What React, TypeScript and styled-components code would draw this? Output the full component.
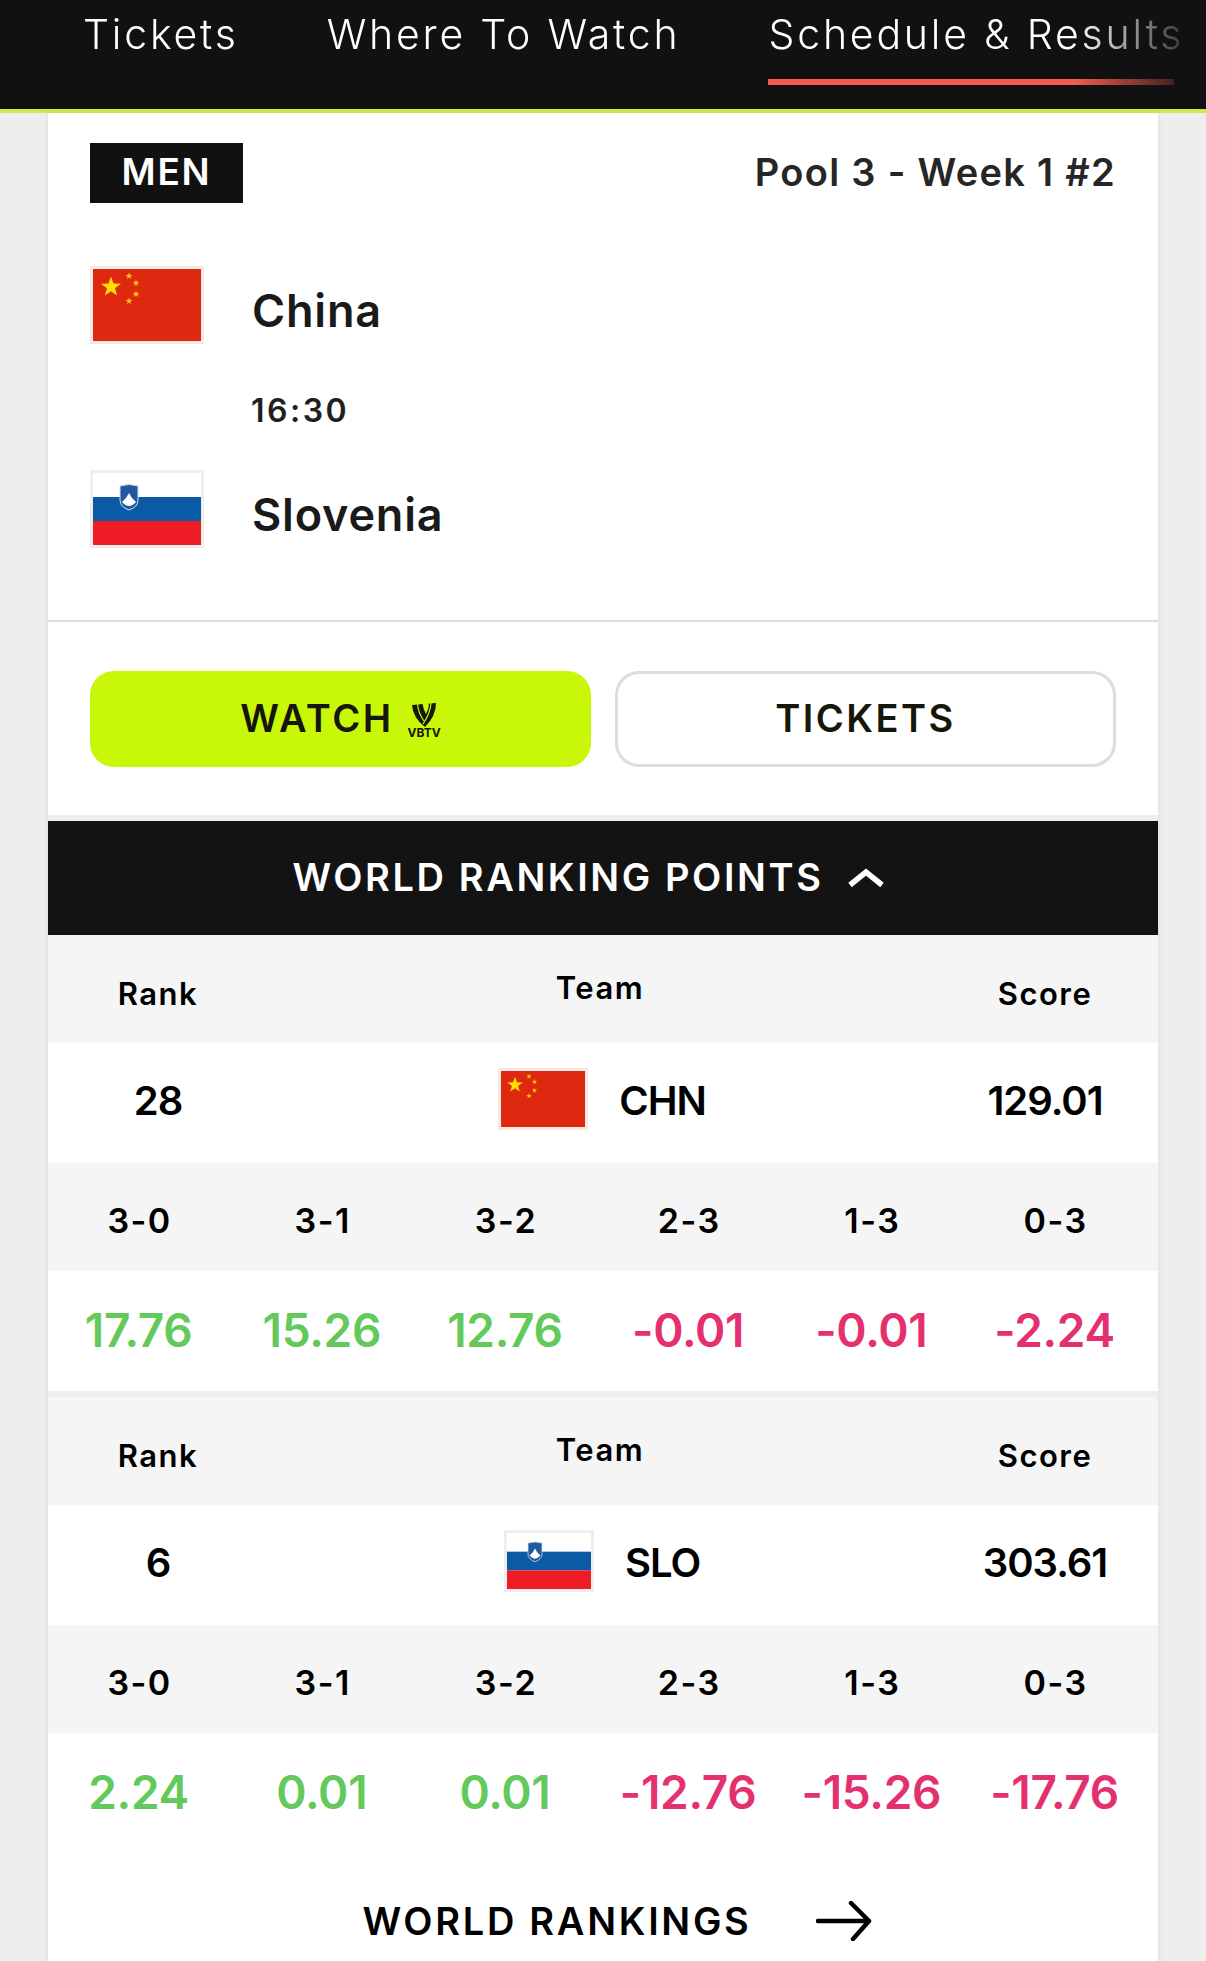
import * as React from 'react'
import styled, { createGlobalStyle } from 'styled-components'

const GlobalStyle = createGlobalStyle`
    html, body {
        margin: 0;
        padding: 0;
        background: #eeeeee;
    }
    body {
        font-family: Inter, "Liberation Sans", sans-serif;
        color: #171717;
    }
    * {
        box-sizing: border-box;
    }
`

const starPoints = (cx: number, cy: number, r: number) =>
    Array.from({ length: 10 }, (_, i) => {
        const radius = i % 2 === 0 ? r : r * 0.4
        const angle = (Math.PI / 5) * i - Math.PI / 2
        return `${cx + radius * Math.cos(angle)},${cy + radius * Math.sin(angle)}`
    }).join(' ')

const Flag = ({ code, width, height }: { code: 'chn' | 'slo'; width: number; height: number }) => (
    <FlagFrame $tint={code === 'chn' ? '#f5e9e6' : '#eeeeee'} style={{ width, height }}>
        {code === 'chn' ? (
            <svg viewBox="0 0 108 72" preserveAspectRatio="none" width="100%" height="100%">
                <rect width="108" height="72" fill="#de2910" />
                <polygon points={starPoints(18, 18, 10.5)} fill="#ffde00" />
                <polygon points={starPoints(36, 7, 3.6)} fill="#fbc613" />
                <polygon points={starPoints(43, 14, 3.6)} fill="#fbc613" />
                <polygon points={starPoints(43, 25, 3.6)} fill="#fbc613" />
                <polygon points={starPoints(36, 32, 3.6)} fill="#fbc613" />
            </svg>
        ) : (
            <svg viewBox="0 0 108 72" preserveAspectRatio="none" width="100%" height="100%">
                <rect width="108" height="24" fill="#ffffff" />
                <rect y="24" width="108" height="24" fill="#0b5aa6" />
                <rect y="48" width="108" height="24" fill="#ee1c25" />
                <path d="M27,13 Q36,10 45,13 L45,27 Q45,34 36,37 Q27,34 27,27 Z" fill="#1f5aa0" stroke="#cfdcec" strokeWidth="1" />
                <path d="M29,29 L33,25 L36,20 L39,25 L43,29 Q36,37 29,29 Z" fill="#ffffff" />
            </svg>
        )}
    </FlagFrame>
)

const VbtvMark = () => (
    <MarkWrap>
        <svg width="24" height="24" viewBox="0 0 24 24" fill="none">
            <path d="M0,2 L24,0 Q24,13 13,24 Q1,15 0,2 Z" fill="#14170a" />
            <path d="M5.500,0 Q6,10 12,18" stroke="#c8f708" strokeWidth="1.200" />
            <path d="M10.500,0 L17,0 Q17,6 14,11 Q11,6 10.500,0 Z" fill="#c8f708" />
            <path d="M19,0 Q18.500,10 11,21" stroke="#c8f708" strokeWidth="1.200" />
        </svg>
        <MarkLabel>VBTV</MarkLabel>
    </MarkWrap>
)

type Rates = { label: string; value: string }[]

const TeamRanking = ({
    rank,
    code,
    flag,
    score,
    rates,
}: {
    rank: string
    code: string
    flag: 'chn' | 'slo'
    score: string
    rates: Rates
}) => (
    <>
        <HeadRow>
            <HeadCell>Rank</HeadCell>
            <HeadCell $raised>Team</HeadCell>
            <HeadCell>Score</HeadCell>
        </HeadRow>
        <TeamRow>
            <TeamValue>{rank}</TeamValue>
            <TeamCell>
                <Flag code={flag} width={90} height={62} />
                <TeamValue>{code}</TeamValue>
            </TeamCell>
            <TeamValue>{score}</TeamValue>
        </TeamRow>
        <RatesHead>
            {rates.map((rate) => (
                <RateLabel key={rate.label}>{rate.label}</RateLabel>
            ))}
        </RatesHead>
        <RatesBody>
            {rates.map((rate) => (
                <RateValue key={rate.label} $negative={rate.value.startsWith('-')}>
                    {rate.value}
                </RateValue>
            ))}
        </RatesBody>
    </>
)

const labels = ['3-0', '3-1', '3-2', '2-3', '1-3', '0-3']
const toRates = (values: string[]): Rates => values.map((value, i) => ({ label: labels[i], value }))

export default function App() {
    return (
        <Page>
            <GlobalStyle />
            <Nav>
                <NavScroller>
                    <NavItem>Tickets</NavItem>
                    <NavItem>Where To Watch</NavItem>
                    <NavItem $active>Schedule &amp; Results</NavItem>
                </NavScroller>
            </Nav>
            <Card>
                <MatchInfo>
                    <MatchTop>
                        <GenderBadge>MEN</GenderBadge>
                        <PoolLabel>Pool 3 - Week 1 #2</PoolLabel>
                    </MatchTop>
                    <MatchTeam>
                        <Flag code="chn" width={114} height={78} />
                        <TeamName>China</TeamName>
                    </MatchTeam>
                    <MatchTime>16:30</MatchTime>
                    <MatchTeam>
                        <Flag code="slo" width={114} height={78} />
                        <TeamName>Slovenia</TeamName>
                    </MatchTeam>
                </MatchInfo>
                <Actions>
                    <ActionButton $primary>
                        WATCH
                        <VbtvMark />
                    </ActionButton>
                    <ActionButton>TICKETS</ActionButton>
                </Actions>
                <PointsBar>
                    WORLD RANKING POINTS
                    <ChevronIcon width="38" height="20" viewBox="0 0 38 20" fill="none">
                        <path d="M3,17 L19,4 L35,17" stroke="#ffffff" strokeWidth="5.500" />
                    </ChevronIcon>
                </PointsBar>
                <TeamRanking
                    rank="28"
                    code="CHN"
                    flag="chn"
                    score="129.01"
                    rates={toRates(['17.76', '15.26', '12.76', '-0.01', '-0.01', '-2.24'])}
                />
                <Separator />
                <TeamRanking
                    rank="6"
                    code="SLO"
                    flag="slo"
                    score="303.61"
                    rates={toRates(['2.24', '0.01', '0.01', '-12.76', '-15.26', '-17.76'])}
                />
                <RankingsLink>
                    WORLD RANKINGS
                    <svg width="56" height="40" viewBox="0 0 56 40" fill="none">
                        <path
                            d="M2,20 L53,20 M35,2 L53,20 L37,38"
                            stroke="#000000"
                            strokeWidth="4.500"
                            strokeLinecap="round"
                            strokeLinejoin="round"
                        />
                    </svg>
                </RankingsLink>
            </Card>
        </Page>
    )
}

const Page = styled.div`
    width: 1206px;
    height: 1961px;
    overflow: hidden;
    background: #eeeeee;
`

const Nav = styled.nav`
    height: 113px;
    background: #111111;
    border-bottom: 4px solid #cdea4a;
    overflow: hidden;
`

const NavScroller = styled.div`
    display: flex;
    gap: 88px;
    padding-left: 83px;
    height: 100%;
    white-space: nowrap;
    mask-image: linear-gradient(to right, #000 1075px, rgba(0, 0, 0, 0.15) 1185px);
`

const NavItem = styled.div<{ $active?: boolean }>`
    position: relative;
    height: 85px;
    padding-top: 9px;
    font-size: 41px;
    line-height: 50px;
    font-weight: 300;
    letter-spacing: 2.800px;
    color: #ffffff;

    &::after {
        content: '';
        display: ${({ $active }) => ($active ? 'block' : 'none')};
        position: absolute;
        left: 0;
        right: 10px;
        bottom: 0;
        height: 6px;
        background: #f25c50;
    }
`

const Card = styled.main`
    width: 1110px;
    margin: 0 auto 0 48px;
    background: #ffffff;
    box-shadow: 0 0 6px rgba(0, 0, 0, 0.08);
`

const MatchInfo = styled.section`
    padding: 30px 42px 0;
    height: 509px;
    border-bottom: 2px solid #dedede;
`

const MatchTop = styled.div`
    display: flex;
    justify-content: space-between;
    align-items: center;
    margin-bottom: 63px;
`

const GenderBadge = styled.div`
    width: 153px;
    height: 60px;
    display: flex;
    align-items: center;
    justify-content: center;
    padding-bottom: 3px;
    background: #111111;
    color: #ffffff;
    font-size: 37px;
    font-weight: 600;
    letter-spacing: 1.800px;
`

const PoolLabel = styled.div`
    font-size: 38px;
    font-weight: 600;
    letter-spacing: 1.300px;
    color: #262626;
    padding-bottom: 3px;
`

const MatchTeam = styled.div`
    display: flex;
    align-items: center;
    gap: 48px;
`

const FlagFrame = styled.div<{ $tint: string }>`
    flex: none;
    border: 3px solid ${({ $tint }) => $tint};
    line-height: 0;
`

const TeamName = styled.div`
    padding-top: 10px;
    font-size: 45px;
    font-weight: 600;
    letter-spacing: 0.800px;
    color: #1a1a1a;
`

const MatchTime = styled.div`
    margin: 52px 0 44px 161px;
    height: 30px;
    font-size: 32px;
    line-height: 30px;
    font-weight: 600;
    letter-spacing: 2.500px;
    color: #1f1f1f;
`

const Actions = styled.section`
    display: grid;
    grid-template-columns: 501px 501px;
    gap: 24px;
    padding: 49px 42px 48px;
`

const ActionButton = styled.div<{ $primary?: boolean }>`
    height: 96px;
    padding-bottom: 2px;
    display: flex;
    align-items: center;
    justify-content: center;
    gap: 14px;
    border-radius: 24px;
    font-size: 38px;
    font-weight: 600;
    letter-spacing: 2.500px;
    color: #14170a;
    background: ${({ $primary }) => ($primary ? '#c8f708' : '#ffffff')};
    border: ${({ $primary }) => ($primary ? 'none' : '3px solid #dddddd')};
`

const MarkWrap = styled.div`
    display: flex;
    flex-direction: column;
    align-items: center;
    margin-top: 5px;
    line-height: 0;
`

const MarkLabel = styled.span`
    font-size: 12px;
    line-height: 12px;
    font-weight: 700;
    letter-spacing: 0;
    color: #14170a;
`

const PointsBar = styled.section`
    height: 120px;
    border-top: 6px solid #eeeeee;
    display: flex;
    align-items: center;
    justify-content: center;
    gap: 24px;
    padding: 0 28px 2px 0;
    background: #131313;
    background-clip: padding-box;
    color: #ffffff;
    font-size: 38px;
    font-weight: 600;
    letter-spacing: 2.600px;
`

const ChevronIcon = styled.svg`
    margin-top: 2px;
`

const HeadRow = styled.div`
    height: 108px;
    display: grid;
    grid-template-columns: 220px 1fr 226px;
    align-items: center;
    background: #f5f5f5;
`

const HeadCell = styled.div<{ $raised?: boolean }>`
    text-align: center;
    font-size: 31px;
    font-weight: 600;
    letter-spacing: 1.500px;
    color: #000000;
    padding: ${({ $raised }) => ($raised ? '0 0 4px' : '8px 0 0')};
`

const TeamRow = styled.div`
    height: 120px;
    padding-bottom: 8px;
    display: grid;
    grid-template-columns: 220px 1fr 226px;
    align-items: center;
    justify-items: center;
`

const TeamCell = styled.div`
    display: flex;
    align-items: center;
    gap: 31px;
    margin-left: 4px;
`

const TeamValue = styled.div`
    padding-top: 3px;
    font-size: 40px;
    font-weight: 600;
    letter-spacing: -1px;
    color: #000000;
`

const RatesHead = styled.div`
    height: 108px;
    padding-top: 6px;
    display: grid;
    grid-template-columns: repeat(6, 183.200px);
    align-items: center;
    background: #f5f5f5;
`

const RateLabel = styled.div`
    text-align: center;
    font-size: 34px;
    font-weight: 600;
    letter-spacing: 1.500px;
    color: #000000;
`

const RatesBody = styled.div`
    height: 120px;
    padding-bottom: 2px;
    margin-left: -1px;
    display: grid;
    grid-template-columns: repeat(6, 183.200px);
    align-items: center;
`

const RateValue = styled.div<{ $negative: boolean }>`
    text-align: center;
    font-size: 46px;
    font-weight: 600;
    letter-spacing: -0.300px;
    color: ${({ $negative }) => ($negative ? '#e5306f' : '#63c95b')};
`

const Separator = styled.div`
    height: 6px;
    background: #eeeeee;
`

const RankingsLink = styled.div`
    height: 130px;
    padding: 6px 0 0 28px;
    display: flex;
    align-items: center;
    justify-content: center;
    gap: 64px;
    font-size: 38px;
    font-weight: 600;
    letter-spacing: 2.700px;
    color: #000000;
`
